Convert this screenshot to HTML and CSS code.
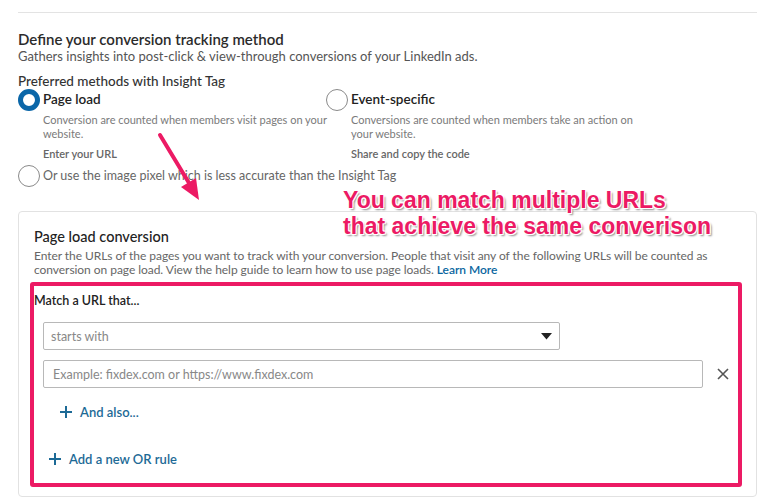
FILE: index.html
```html
<!DOCTYPE html>
<html lang="en">
<head>
<meta charset="utf-8">
<title>Conversion tracking method</title>
<link rel="stylesheet" href="styles.css">
</head>
<body>
<div class="page">
  <div class="rule"></div>
  <h2 class="title">Define your conversion tracking method</h2>
  <p class="subtitle">Gathers insights into post-click &amp; view-through conversions of your LinkedIn ads.</p>
  <p class="group-label">Preferred methods with Insight Tag</p>
  <div class="methods">
    <div class="method">
      <span class="radio radio-on"></span>
      <div class="method-body">
        <div class="method-name">Page load</div>
        <div class="method-desc">Conversion are counted when members visit pages on your website.</div>
        <div class="method-action">Enter your URL</div>
      </div>
    </div>
    <div class="method method-right">
      <span class="radio"></span>
      <div class="method-body">
        <div class="method-name">Event-specific</div>
        <div class="method-desc">Conversions are counted when members take an action on your website.</div>
        <div class="method-action">Share and copy the code</div>
      </div>
    </div>
  </div>
  <div class="pixel-row">
    <span class="radio"></span>
    <span class="pixel-text">Or use the image pixel which is less accurate than the Insight Tag</span>
  </div>

  <section class="card">
    <h3 class="card-title">Page load conversion</h3>
    <p class="card-desc">Enter the URLs of the pages you want to track with your conversion. People that visit any of the following URLs will be counted as conversion on page load. View the help guide to learn how to use page loads. <a class="learn">Learn More</a></p>
    <div class="highlight">
      <div class="match-label">Match a URL that...</div>
      <div class="select">
        <span class="select-text">starts with</span>
        <svg class="caret" width="11" height="7" viewBox="0 0 11 7"><path d="M0 0H11L5.5 6.5Z" fill="#222"/></svg>
      </div>
      <div class="url-row">
        <div class="input"><span class="placeholder">Example: fixdex.com or https://www.fixdex.com</span></div>
        <svg class="close" width="12" height="12" viewBox="0 0 12 12"><path d="M1 1L11 11M11 1L1 11" stroke="#555" stroke-width="1.6"/></svg>
      </div>
      <div class="and-also"><svg class="plus" width="12" height="12" viewBox="0 0 12 12"><path d="M6 0V12M0 6H12" stroke="#1d6a96" stroke-width="2"/></svg>And also...</div>
      <div class="or-rule"><svg class="plus" width="12" height="12" viewBox="0 0 12 12"><path d="M6 0V12M0 6H12" stroke="#1d6a96" stroke-width="2"/></svg>Add a new OR rule</div>
    </div>
  </section>

  <div class="callout">You can match multiple URLs<br>that achieve the same converison</div>
  <svg class="arrow" width="80" height="90" viewBox="0 0 80 90">
    <path d="M10 7L39 55" stroke="#ec1a64" stroke-width="4" stroke-linecap="round"/>
    <path d="M31 59L49 72L46 50Z" fill="#ec1a64"/>
  </svg>
</div>
</body>
</html>
```

FILE: styles.css
```css
* { box-sizing: border-box; }
html, body { margin: 0; padding: 0; background: #fff; }
body {
  font-family: "Segoe UI", "Lato", "Noto Sans", sans-serif;
  color: #333;
}
.page {
  position: relative;
  padding: 12px 11px 0 18px;
  width: 768px;
  height: 503px;
  overflow: hidden;
}
.rule { border-top: 1px solid #e3e3e3; }
.title {
  margin: 17px 0 0;
  font-size: 15px;
  font-weight: 600;
  color: #2b2b2b;
  line-height: 18px;
}
.subtitle {
  margin: 0;
  font-size: 13px;
  line-height: 17px;
  color: #555;
}
.group-label {
  margin: 8px 0 0;
  font-size: 13.5px;
  line-height: 17px;
  color: #333;
  font-weight: 500;
}
.methods { display: flex; margin-top: -1px; }
.method { display: flex; width: 308px; gap: 3px; }
.method-right { width: 320px; }
.radio {
  flex: none;
  width: 22px;
  height: 22px;
  border-radius: 50%;
  border: 1px solid #8a8a8a;
  background: #fff;
}
.radio-on { border: 5px solid #0a66a8; }
.method-body { padding-top: 1px; }
.method-name {
  font-size: 13.5px;
  line-height: 18px;
  color: #222;
  font-weight: 600;
}
.method-desc {
  margin-top: 5px;
  font-size: 11px;
  line-height: 14px;
  color: #7a7a7a;
  width: 285px;
}
.method-action {
  margin-top: 6px;
  font-size: 11px;
  line-height: 14px;
  font-weight: 600;
  color: #666;
}
.pixel-row { display: flex; align-items: center; gap: 3px; margin-top: 4px; }
.pixel-text { font-size: 12.5px; color: #666; line-height: 18px; }

.card {
  margin-top: 24px;
  border: 1px solid #e2e2e2;
  border-radius: 4px;
  padding: 16px 14px 9px 11px;
  width: 739px;
}
.card-title {
  margin: 0 0 0 4px;
  font-size: 14.5px;
  font-weight: 500;
  color: #222;
  line-height: 18px;
}
.card-desc {
  margin: 3px 0 0 4px;
  font-size: 12px;
  letter-spacing: -0.05px;
  line-height: 14px;
  color: #666;
}
.learn { color: #0a66a0; font-weight: 600; }
.highlight {
  margin-top: 5px;
  border: 4px solid #ec1a64;
  border-radius: 3px;
  padding: 7px 0 14px 0;
  height: 205px;
}
.match-label {
  font-size: 12.5px;
  font-weight: 600;
  color: #222;
  line-height: 16px;
}
.select {
  margin: 13px 0 0 9px;
  width: 517px;
  height: 28px;
  border: 1px solid #b8b8b8;
  border-radius: 2px;
  display: flex;
  align-items: center;
  justify-content: space-between;
  padding: 0 7px 0 7px;
}
.select-text, .placeholder { font-size: 12.5px; color: #888; }
.url-row { display: flex; align-items: center; margin: 10px 0 0 9px; gap: 14px; }
.input {
  width: 660px;
  height: 28px;
  border: 1px solid #b8b8b8;
  border-radius: 2px;
  display: flex;
  align-items: center;
  padding: 0 9px;
}
.and-also, .or-rule {
  display: flex;
  align-items: center;
  font-size: 13px;
  font-weight: 600;
  color: #1d6a96;
  line-height: 16px;
}
.and-also { margin: 16px 0 0 26px; }
.or-rule { margin: 31px 0 0 15px; }
.plus { margin-right: 8px; flex: none; }

.callout {
  position: absolute;
  left: 343px;
  top: 187px;
  font-family: "Liberation Sans", Arial, sans-serif;
  font-weight: 700;
  font-size: 23px;
  line-height: 26px;
  color: #ec1a64;
  text-shadow: -1px -1px 0 #fff, 1px -1px 0 #fff, -1px 1px 0 #fff, 1px 1px 0 #fff, 2px 2px 2px rgba(0,0,0,.45);
}
.arrow {
  position: absolute;
  left: 150px;
  top: 128px;
}
```
